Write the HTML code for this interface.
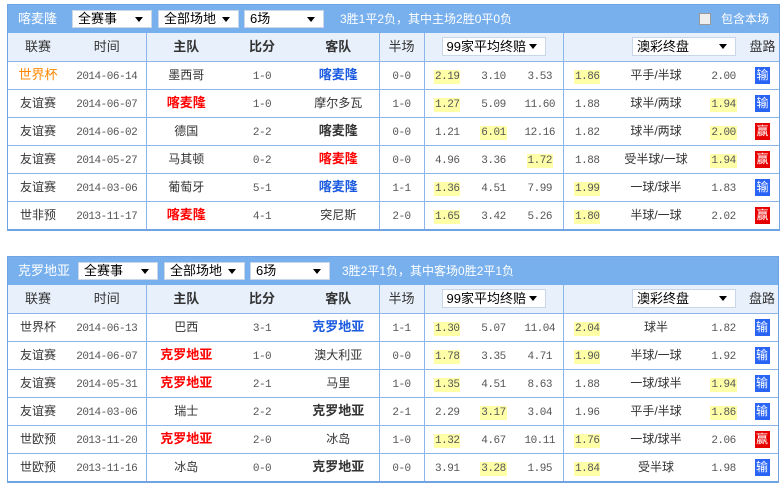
<!DOCTYPE html>
<html><head><meta charset="utf-8"><style>
*{margin:0;padding:0;box-sizing:border-box}
body{width:784px;height:489px;background:#fff;font-family:"Liberation Sans","Noto Sans CJK SC",sans-serif;font-size:12px;color:#333;position:relative;overflow:hidden}
.box{position:absolute;left:7px;width:773px;border:1px solid #6fa3e3;border-bottom:2px solid #6fa3e3}
.bar{height:28px;background:#78b0ee;color:#fff;position:relative;font-size:12px;line-height:28px}
.bar .t{position:absolute;left:10px;top:0;font-size:13px;line-height:28px}
.sel{position:absolute;top:5px;height:18px;background:#fff;border:1px solid #c8d6e8;color:#000;font-size:13px;padding-left:5px;line-height:16px}
.sel:after{content:"";position:absolute;right:8px;top:6px;border:4px solid transparent;border-top:5px solid #000}
.bar .s{position:absolute;top:0;line-height:28px}
table{border-collapse:collapse;table-layout:fixed;width:771px}
td{height:28px;text-align:center;vertical-align:middle;border-top:1px solid #8cb6ea;white-space:nowrap;padding:0;line-height:16px}
tr.h td{background:#e8f0fb;border-top:none;height:28px;font-size:13px}
.b{font-weight:bold}
.vl{border-left:1px solid #8cb6ea}
.n{font-family:"Liberation Mono",monospace;font-size:11px;letter-spacing:-0.5px;color:#555;padding-top:3px}
.y{background:#ffffa8;padding:1px 1px}
.red{color:#f00;font-weight:bold;font-size:13px}
.blu{color:#1a5ae0;font-weight:bold;font-size:13px}
.bk{color:#333;font-weight:bold;font-size:13px}
.bd{display:inline-block;width:15px;height:17px;color:#fff;line-height:17px;font-size:12px;letter-spacing:0}
.L{background:#2a64f5}.W{background:#e80000}
.hs{position:relative;display:inline-block;height:19px;background:#fff;border:1px solid #c8d6e8;text-align:left;padding-left:4px;line-height:17px;font-size:13px;color:#000;vertical-align:middle}
.hs:after{content:"";position:absolute;right:8px;top:6px;border:4px solid transparent;border-top:5px solid #000}
</style></head><body>

<div class="box" style="top:4px">
<div class="bar"><span class="t">喀麦隆</span>
<div class="sel" style="left:64px;width:80px">全赛事</div>
<div class="sel" style="left:150px;width:81px">全部场地</div>
<div class="sel" style="left:236px;width:80px">6场</div>
<span class="s" style="left:332px">3胜1平2负，其中主场2胜0平0负</span>
<span style="position:absolute;left:691px;top:8px;width:12px;height:12px;border:1px solid #999;background:#eee"></span>
<span class="s" style="left:713px">包含本场</span>
</div>
<table>
<colgroup><col style="width:60px"><col style="width:78px"><col style="width:80px"><col style="width:72px"><col style="width:81px"><col style="width:45px"><col style="width:46px"><col style="width:47px"><col style="width:46px"><col style="width:48px"><col style="width:90px"><col style="width:45px"><col style="width:33px"></colgroup>
<tr class="h"><td>联赛</td><td>时间</td><td class="vl b">主队</td><td class="b">比分</td><td class="b">客队</td><td class="vl">半场</td><td colspan="3" class="vl"><span class="hs" style="width:104px">99家平均终赔</span></td><td colspan="3" class="vl" style="text-align:right;padding-right:0"><span class="hs" style="width:104px;margin-right:10px">澳彩终盘</span></td><td>盘路</td></tr>
<tr><td style="color:#f80;font-size:13px">世界杯</td><td class="n">2014-06-14</td><td class="vl">墨西哥</td><td class="n">1-0</td><td class="blu">喀麦隆</td><td class="vl n">0-0</td><td class="vl n"><span class="y">2.19</span></td><td class="n">3.10</td><td class="n">3.53</td><td class="vl n"><span class="y">1.86</span></td><td>平手/半球</td><td class="n">2.00</td><td><span class="bd L">输</span></td></tr>
<tr><td>友谊赛</td><td class="n">2014-06-07</td><td class="vl red">喀麦隆</td><td class="n">1-0</td><td>摩尔多瓦</td><td class="vl n">1-0</td><td class="vl n"><span class="y">1.27</span></td><td class="n">5.09</td><td class="n">11.60</td><td class="vl n">1.88</td><td>球半/两球</td><td class="n"><span class="y">1.94</span></td><td><span class="bd L">输</span></td></tr>
<tr><td>友谊赛</td><td class="n">2014-06-02</td><td class="vl">德国</td><td class="n">2-2</td><td class="bk">喀麦隆</td><td class="vl n">0-0</td><td class="vl n">1.21</td><td class="n"><span class="y">6.01</span></td><td class="n">12.16</td><td class="vl n">1.82</td><td>球半/两球</td><td class="n"><span class="y">2.00</span></td><td><span class="bd W">赢</span></td></tr>
<tr><td>友谊赛</td><td class="n">2014-05-27</td><td class="vl">马其顿</td><td class="n">0-2</td><td class="red">喀麦隆</td><td class="vl n">0-0</td><td class="vl n">4.96</td><td class="n">3.36</td><td class="n"><span class="y">1.72</span></td><td class="vl n">1.88</td><td>受半球/一球</td><td class="n"><span class="y">1.94</span></td><td><span class="bd W">赢</span></td></tr>
<tr><td>友谊赛</td><td class="n">2014-03-06</td><td class="vl">葡萄牙</td><td class="n">5-1</td><td class="blu">喀麦隆</td><td class="vl n">1-1</td><td class="vl n"><span class="y">1.36</span></td><td class="n">4.51</td><td class="n">7.99</td><td class="vl n"><span class="y">1.99</span></td><td>一球/球半</td><td class="n">1.83</td><td><span class="bd L">输</span></td></tr>
<tr><td>世非预</td><td class="n">2013-11-17</td><td class="vl red">喀麦隆</td><td class="n">4-1</td><td>突尼斯</td><td class="vl n">2-0</td><td class="vl n"><span class="y">1.65</span></td><td class="n">3.42</td><td class="n">5.26</td><td class="vl n"><span class="y">1.80</span></td><td>半球/一球</td><td class="n">2.02</td><td><span class="bd W">赢</span></td></tr>
</table></div>

<div class="box" style="top:256px;width:772px">
<div class="bar"><span class="t">克罗地亚</span>
<div class="sel" style="left:70px;width:80px">全赛事</div>
<div class="sel" style="left:156px;width:81px">全部场地</div>
<div class="sel" style="left:242px;width:80px">6场</div>
<span class="s" style="left:334px">3胜2平1负，其中客场0胜2平1负</span>
</div>
<table style="width:770px">
<colgroup><col style="width:60px"><col style="width:78px"><col style="width:80px"><col style="width:72px"><col style="width:81px"><col style="width:45px"><col style="width:46px"><col style="width:47px"><col style="width:46px"><col style="width:48px"><col style="width:90px"><col style="width:45px"><col style="width:32px"></colgroup>
<tr class="h"><td>联赛</td><td>时间</td><td class="vl b">主队</td><td class="b">比分</td><td class="b">客队</td><td class="vl">半场</td><td colspan="3" class="vl"><span class="hs" style="width:104px">99家平均终赔</span></td><td colspan="3" class="vl" style="text-align:right"><span class="hs" style="width:104px;margin-right:10px">澳彩终盘</span></td><td>盘路</td></tr>
<tr><td>世界杯</td><td class="n">2014-06-13</td><td class="vl">巴西</td><td class="n">3-1</td><td class="blu">克罗地亚</td><td class="vl n">1-1</td><td class="vl n"><span class="y">1.30</span></td><td class="n">5.07</td><td class="n">11.04</td><td class="vl n"><span class="y">2.04</span></td><td>球半</td><td class="n">1.82</td><td><span class="bd L">输</span></td></tr>
<tr><td>友谊赛</td><td class="n">2014-06-07</td><td class="vl red">克罗地亚</td><td class="n">1-0</td><td>澳大利亚</td><td class="vl n">0-0</td><td class="vl n"><span class="y">1.78</span></td><td class="n">3.35</td><td class="n">4.71</td><td class="vl n"><span class="y">1.90</span></td><td>半球/一球</td><td class="n">1.92</td><td><span class="bd L">输</span></td></tr>
<tr><td>友谊赛</td><td class="n">2014-05-31</td><td class="vl red">克罗地亚</td><td class="n">2-1</td><td>马里</td><td class="vl n">1-0</td><td class="vl n"><span class="y">1.35</span></td><td class="n">4.51</td><td class="n">8.63</td><td class="vl n">1.88</td><td>一球/球半</td><td class="n"><span class="y">1.94</span></td><td><span class="bd L">输</span></td></tr>
<tr><td>友谊赛</td><td class="n">2014-03-06</td><td class="vl">瑞士</td><td class="n">2-2</td><td class="bk">克罗地亚</td><td class="vl n">2-1</td><td class="vl n">2.29</td><td class="n"><span class="y">3.17</span></td><td class="n">3.04</td><td class="vl n">1.96</td><td>平手/半球</td><td class="n"><span class="y">1.86</span></td><td><span class="bd L">输</span></td></tr>
<tr><td>世欧预</td><td class="n">2013-11-20</td><td class="vl red">克罗地亚</td><td class="n">2-0</td><td>冰岛</td><td class="vl n">1-0</td><td class="vl n"><span class="y">1.32</span></td><td class="n">4.67</td><td class="n">10.11</td><td class="vl n"><span class="y">1.76</span></td><td>一球/球半</td><td class="n">2.06</td><td><span class="bd W">赢</span></td></tr>
<tr><td>世欧预</td><td class="n">2013-11-16</td><td class="vl">冰岛</td><td class="n">0-0</td><td class="bk">克罗地亚</td><td class="vl n">0-0</td><td class="vl n">3.91</td><td class="n"><span class="y">3.28</span></td><td class="n">1.95</td><td class="vl n"><span class="y">1.84</span></td><td>受半球</td><td class="n">1.98</td><td><span class="bd L">输</span></td></tr>
</table></div>
</body></html>
